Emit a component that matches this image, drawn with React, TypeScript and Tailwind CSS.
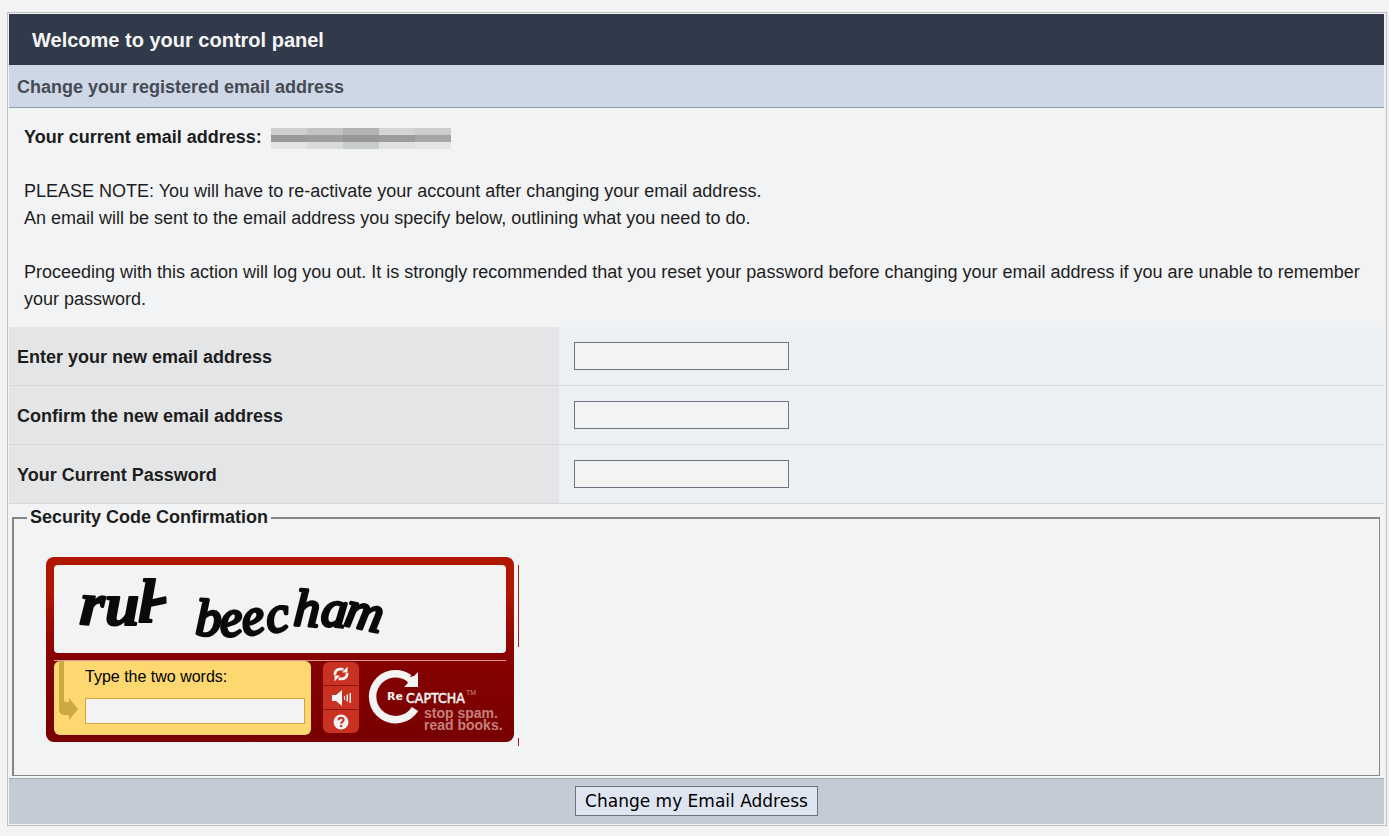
import React from 'react';

interface Field {
  id: string;
  label: string;
  type: string;
}

const FIELDS: Field[] = [
  { id: 'new-email', label: 'Enter your new email address', type: 'text' },
  { id: 'confirm-email', label: 'Confirm the new email address', type: 'text' },
  { id: 'password', label: 'Your Current Password', type: 'password' },
];

const MASK_CELLS = [
  'bg-[#cdcecd]', 'bg-[#c3c3c3]', 'bg-[#b3b3b3]', 'bg-[#d3d5d3]', 'bg-[#cccecd]',
  'bg-[#989898]', 'bg-[#9d9d9d]', 'bg-[#989898]', 'bg-[#9b9c9d]', 'bg-[#a5a5a5]',
  'bg-[#e3e4e4]', 'bg-[#dadada]', 'bg-[#c8cccb]', 'bg-[#e2e2e3]', 'bg-[#e4e5e7]',
];

const MaskedEmail: React.FC = () => (
  <span className="ml-[9px] inline-grid w-[180px] grid-cols-5 align-middle" aria-label="hidden">
    {MASK_CELLS.map((cell, i) => (
      <span key={i} className={`h-[7px] ${cell}`}></span>
    ))}
  </span>
);

const FormRow: React.FC<{ field: Field }> = ({ field }) => (
  <div className="flex border-b border-[#d6d8da]">
    <label htmlFor={field.id} className="flex w-2/5 items-center bg-[#e4e5e6] px-2 pt-[2px] font-bold">
      {field.label}
    </label>
    <div className="w-3/5 bg-[#ecf0f3] p-[15px]">
      <input
        id={field.id}
        type={field.type}
        className="block h-7 w-[215px] border border-[#6b7280] bg-[#f3f3f3] px-1 text-base"
      />
    </div>
  </div>
);

const ChallengeWords: React.FC = () => (
  <svg className="h-full w-full overflow-visible" viewBox="0 0 452 88" fill="#0a0a0a" stroke="#0a0a0a" strokeLinejoin="round">
    <g fontFamily="Liberation Serif, serif">
      <text x="25 51 84 97" y="59 60 57 53" rotate="4 0 0 -12" fontSize="62" fontWeight="bold" fontStyle="italic" strokeWidth="2">
        rul-
      </text>
      <text x="141 167 190 214 239 266 289" y="70 72 71 68 60 60 60" rotate="2 -6 -10 -8 4 6 12" fontSize="52" fontStyle="italic" strokeWidth="3">
        beecham
      </text>
    </g>
  </svg>
);

const ReloadIcon: React.FC = () => (
  <svg className="h-4 w-4" viewBox="0 0 16 16" fill="none" stroke="#f3f3f3" strokeWidth="2.800">
    <path d="M2 9C1.500 5.500 4 3.200 7 3.200h3.500" />
    <path d="M14 7c.5 3.500-2 5.800-5 5.800H5.500" />
    <path d="M9 6.500h5.500V.5zM7 9.500H1.500v6z" fill="#f3f3f3" stroke="none" />
  </svg>
);

const SpeakerIcon: React.FC = () => (
  <svg className="h-4 w-5" viewBox="0 0 20 16" fill="#f3f3f3">
    <path d="M1 5h4l6-5v16l-6-5H1z" />
    <path d="M13 6h1v4h-1zM15.500 4.500h1.500v7h-1.500zM18.500 3H20v10h-1.500z" />
  </svg>
);

const HelpIcon: React.FC = () => (
  <svg className="h-4 w-4" viewBox="0 0 16 16">
    <circle cx="8" cy="8" r="7.500" fill="#f3f3f3" />
    <path d="M5.500 6.200C5.500 2.800 10.700 3 10.600 6c0 1.700-2.500 1.700-2.500 3.700" fill="none" stroke="#c93120" strokeWidth="2" />
    <path d="M7 11h2.200v2H7z" fill="#c93120" />
  </svg>
);

const TOOLS = [
  { name: 'Get a new challenge', icon: <ReloadIcon /> },
  { name: 'Get an audio challenge', icon: <SpeakerIcon /> },
  { name: 'Help', icon: <HelpIcon /> },
];

const CaptchaLogo: React.FC = () => (
  <svg className="h-[73px] w-[141px] overflow-visible" viewBox="0 0 141 73" fill="#f3f3f3">
    <path d="M50 48A23 23 0 1 1 44 17" fill="none" stroke="#f3f3f3" strokeWidth="7.500" />
    <path d="M53 11v15H39l4-4-3-5 9-2z" />
    <text x="22" y="39" fontFamily="DejaVu Sans, sans-serif" fontWeight="bold" fontSize="11">Re</text>
    <text x="41" y="42" fontFamily="DejaVu Sans Condensed, sans-serif" fontSize="14" stroke="#f3f3f3" strokeWidth="0.500">
      CAPTCHA
    </text>
    <text x="101" y="34" fontFamily="Liberation Sans, sans-serif" fontSize="7" fill="#cf8a87">TM</text>
    <text fontFamily="Liberation Sans, sans-serif" fontWeight="bold" fontSize="14" fill="#c4807e">
      <tspan x="59" y="57">stop spam.</tspan>
      <tspan x="59" y="69">read books.</tspan>
    </text>
  </svg>
);

const Captcha: React.FC = () => (
  <div className="relative w-[468px] rounded-lg bg-gradient-to-b from-[#b01600] from-20% via-[#850200] via-55% to-[#780000] px-2 pt-2 pb-[7px]">
    <div className="h-[88px] w-[452px] rounded-[4px] bg-[#f3f3f3]">
      <ChallengeWords />
    </div>
    <div className="mt-[7px] flex border-t border-[#d89a98]">
      <div className="flex h-[74px] w-[257px] rounded-md bg-[#fdd870]">
        <svg className="h-[60px] w-[31px]" viewBox="0 0 31 60" fill="#cba840">
          <path d="M5 0h5v39q0 2 2 2h3v-4l9 11-9 11v-5h-4q-6 0-6-6z" />
        </svg>
        <div className="pt-1">
          <label htmlFor="captcha" className="block text-base leading-6 text-black">
            Type the two words:
          </label>
          <input id="captcha" type="text" className="mt-[9px] block h-[26px] w-[220px] border border-[#cba840] bg-[#f3f3f3] px-1 text-base" />
        </div>
      </div>
      <div className="mt-px ml-3 flex h-[71px] w-[36px] flex-col divide-y divide-[#8d1208] overflow-hidden rounded-md bg-[#c93120]">
        {TOOLS.map((tool) => (
          <button key={tool.name} type="button" aria-label={tool.name} className="flex flex-1 items-center justify-center">
            {tool.icon}
          </button>
        ))}
      </div>
      <div className="ml-[6px]">
        <CaptchaLogo />
      </div>
    </div>
    <span className="absolute top-2 -right-[5px] h-[82px] w-px bg-[#a02018]"></span>
    <span className="absolute -right-[5px] -bottom-1 h-2 w-px bg-[#a02018]"></span>
  </div>
);

const App: React.FC = () => {
  return (
    <main className="min-h-screen bg-[#f3f3f3] pt-3 pr-[2px] pb-2 pl-[7px] font-['Liberation_Sans',Arial,sans-serif] text-lg leading-[27px] text-[#1d1d1d]">
      <form className="border border-[#c2c2c2] bg-[#f2f3f4] py-px pr-[2px] pl-px" onSubmit={(e) => e.preventDefault()}>
        <h1 className="bg-[#313a4a] px-[23px] pt-[13px] pb-[11px] text-xl leading-[27px] font-bold text-[#f5f5f5]">
          Welcome to your control panel
        </h1>
        <h2 className="border-b border-[#929ca8] bg-[#cdd7e6] px-2 pt-[9px] pb-[6px] font-bold text-[#464b53]">
          Change your registered email address
        </h2>

        <div className="px-[15px] pt-4 pb-[14px]">
          <p className="mb-[27px]">
            <b>Your current email address:</b>
            <MaskedEmail />
          </p>
          <p className="mb-[27px]">
            PLEASE NOTE: You will have to re-activate your account after changing your email address.
            <br />
            An email will be sent to the email address you specify below, outlining what you need to do.
          </p>
          <p>
            Proceeding with this action will log you out. It is strongly recommended that you reset your password before
            changing your email address if you are unable to remember your password.
          </p>
        </div>

        {FIELDS.map((field) => (
          <FormRow key={field.id} field={field} />
        ))}

        <fieldset className="mr-1 mb-[2px] ml-[3px] border-t-2 border-r border-b border-l-2 border-[#868686] px-[13px] pb-[33px]">
          <legend className="px-[3px] font-bold">Security Code Confirmation</legend>
          <div className="pt-[26px] pl-[19px]">
            <Captcha />
          </div>
        </fieldset>

        <div className="flex justify-center border-t border-[#a3adb8] bg-[#c5cbd4] pt-[7px] pb-2">
          <button
            type="submit"
            className="h-[30px] w-[243px] border border-[#6b7280] bg-[#dfe5f0] font-['DejaVu_Sans',Verdana,sans-serif] text-[17px] text-black"
          >
            Change my Email Address
          </button>
        </div>
      </form>
    </main>
  );
};

export default App;
